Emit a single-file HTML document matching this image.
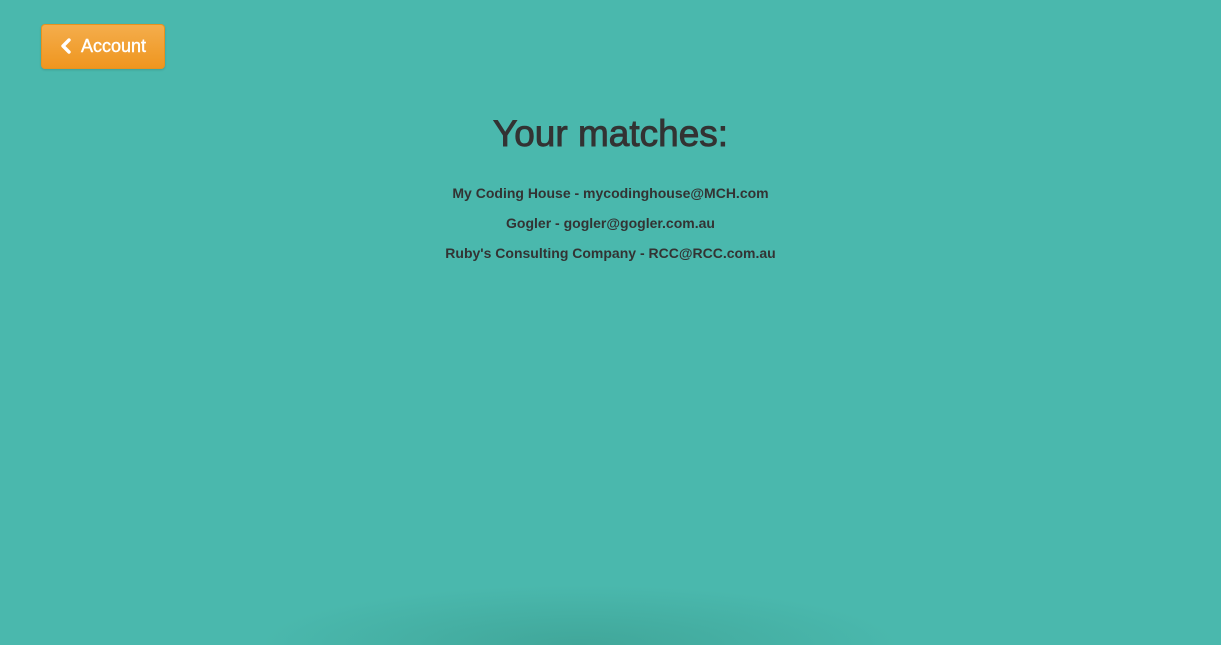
<!DOCTYPE html>
<html><head><meta charset="utf-8">
<style>
html,body{margin:0;padding:0;width:1221px;height:645px;overflow:hidden;background:#4ab8ad;font-family:"Liberation Sans",Arial,sans-serif;color:#333;}
.wrap{position:relative;width:1221px;height:645px;overflow:hidden;}
.btn{position:absolute;left:41px;top:24px;width:124px;height:45px;border-radius:4px;background:linear-gradient(#f4ad4c,#ef961f);border:1px solid #e8921f;box-sizing:border-box;color:#fff;font-size:18px;line-height:42px;box-shadow:0 1px 2px rgba(0,0,0,.15);-webkit-text-stroke:0.4px #fff;}
.btn svg{position:absolute;left:18px;top:13px;}
.btn span{position:absolute;left:39px;top:0;}
h1{position:absolute;left:0;right:0;top:113px;margin:0;text-align:center;font-size:37px;font-weight:normal;line-height:42px;color:#333;-webkit-text-stroke:0.9px #333;}
.m{position:absolute;left:0;right:0;text-align:center;font-size:14px;font-weight:bold;color:#333;}
.sh{position:absolute;left:260px;width:640px;top:585px;height:60px;background:radial-gradient(ellipse 50% 100% at 50% 100%,rgba(55,150,135,.5),rgba(55,150,135,0));}
</style></head><body><div class="wrap">
<div class="sh"></div>
<div class="btn"><svg width="12" height="16" viewBox="0 0 12 16"><path d="M9 2 L3 8 L9 14" stroke="#fff" stroke-width="3.4" fill="none" stroke-linecap="round" stroke-linejoin="round"/></svg><span>Account</span></div>
<h1>Your matches:</h1>
<div class="m" style="top:185px">My Coding House - mycodinghouse@MCH.com</div>
<div class="m" style="top:215px">Gogler - gogler@gogler.com.au</div>
<div class="m" style="top:245px">Ruby's Consulting Company - RCC@RCC.com.au</div>
</div></body></html>
